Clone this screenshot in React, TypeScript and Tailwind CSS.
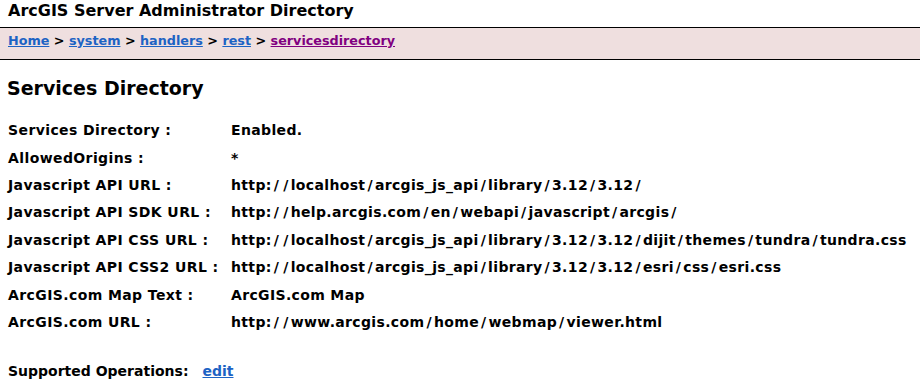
const rows: [string, string][] = [
  ['Services Directory :', 'Enabled.'],
  ['AllowedOrigins :', '*'],
  ['Javascript API URL :', 'http://localhost/arcgis_js_api/library/3.12/3.12/'],
  ['Javascript API SDK URL :', 'http://help.arcgis.com/en/webapi/javascript/arcgis/'],
  ['Javascript API CSS URL :', 'http://localhost/arcgis_js_api/library/3.12/3.12/dijit/themes/tundra/tundra.css'],
  ['Javascript API CSS2 URL :', 'http://localhost/arcgis_js_api/library/3.12/3.12/esri/css/esri.css'],
  ['ArcGIS.com Map Text :', 'ArcGIS.com Map'],
  ['ArcGIS.com URL :', 'http://www.arcgis.com/home/webmap/viewer.html'],
];

const crumbs = ['Home', 'system', 'handlers', 'rest'];

// verdana draws wide slashes; pad them so urls line up with the original
function Spaced({ text }: { text: string }) {
  const parts = text.split('/');
  return (
    <>
      {parts.map((p, i) => (
        <span key={i}>
          {p}
          {i < parts.length - 1 && <span className="mx-[2px]">/</span>}
        </span>
      ))}
    </>
  );
}

export default function App() {
  return (
    <div className="w-[920px] h-[392px] overflow-hidden bg-white text-black font-['DejaVu_Sans',Verdana,sans-serif] font-bold">
      <div className="px-2 h-[27px] text-[16px] leading-[22px]">ArcGIS Server Administrator Directory</div>

      <div className="border-y border-black bg-[#efdfdf] px-2 pt-1 pb-[9px] text-[12.75px] leading-[18px]">
        {crumbs.map((c) => (
          <span key={c}>
            <a href="#" className="text-[#1d63c4] underline">{c}</a>
            {' > '}
          </span>
        ))}
        <a href="#" className="text-[#800080] underline">servicesdirectory</a>
      </div>

      <h2 className="mt-4 px-[7px] text-[19px] leading-6">Services Directory</h2>

      <table className="mt-[17px] ml-2 border-collapse text-[14px]">
        <tbody>
          {rows.map(([label, value]) => (
            <tr key={label} className="h-[27.4px]">
              <td className="w-[223px] p-0 align-middle tracking-[0.4px]">{label}</td>
              <td className="p-0 align-middle tracking-[0.35px]">
                <Spaced text={value} />
              </td>
            </tr>
          ))}
        </tbody>
      </table>

      <div className="mt-[25px] px-2 text-[14px] leading-5">
        Supported Operations:
        <a href="#" className="ml-[14px] text-[#1d63c4] underline">edit</a>
      </div>
    </div>
  );
}
